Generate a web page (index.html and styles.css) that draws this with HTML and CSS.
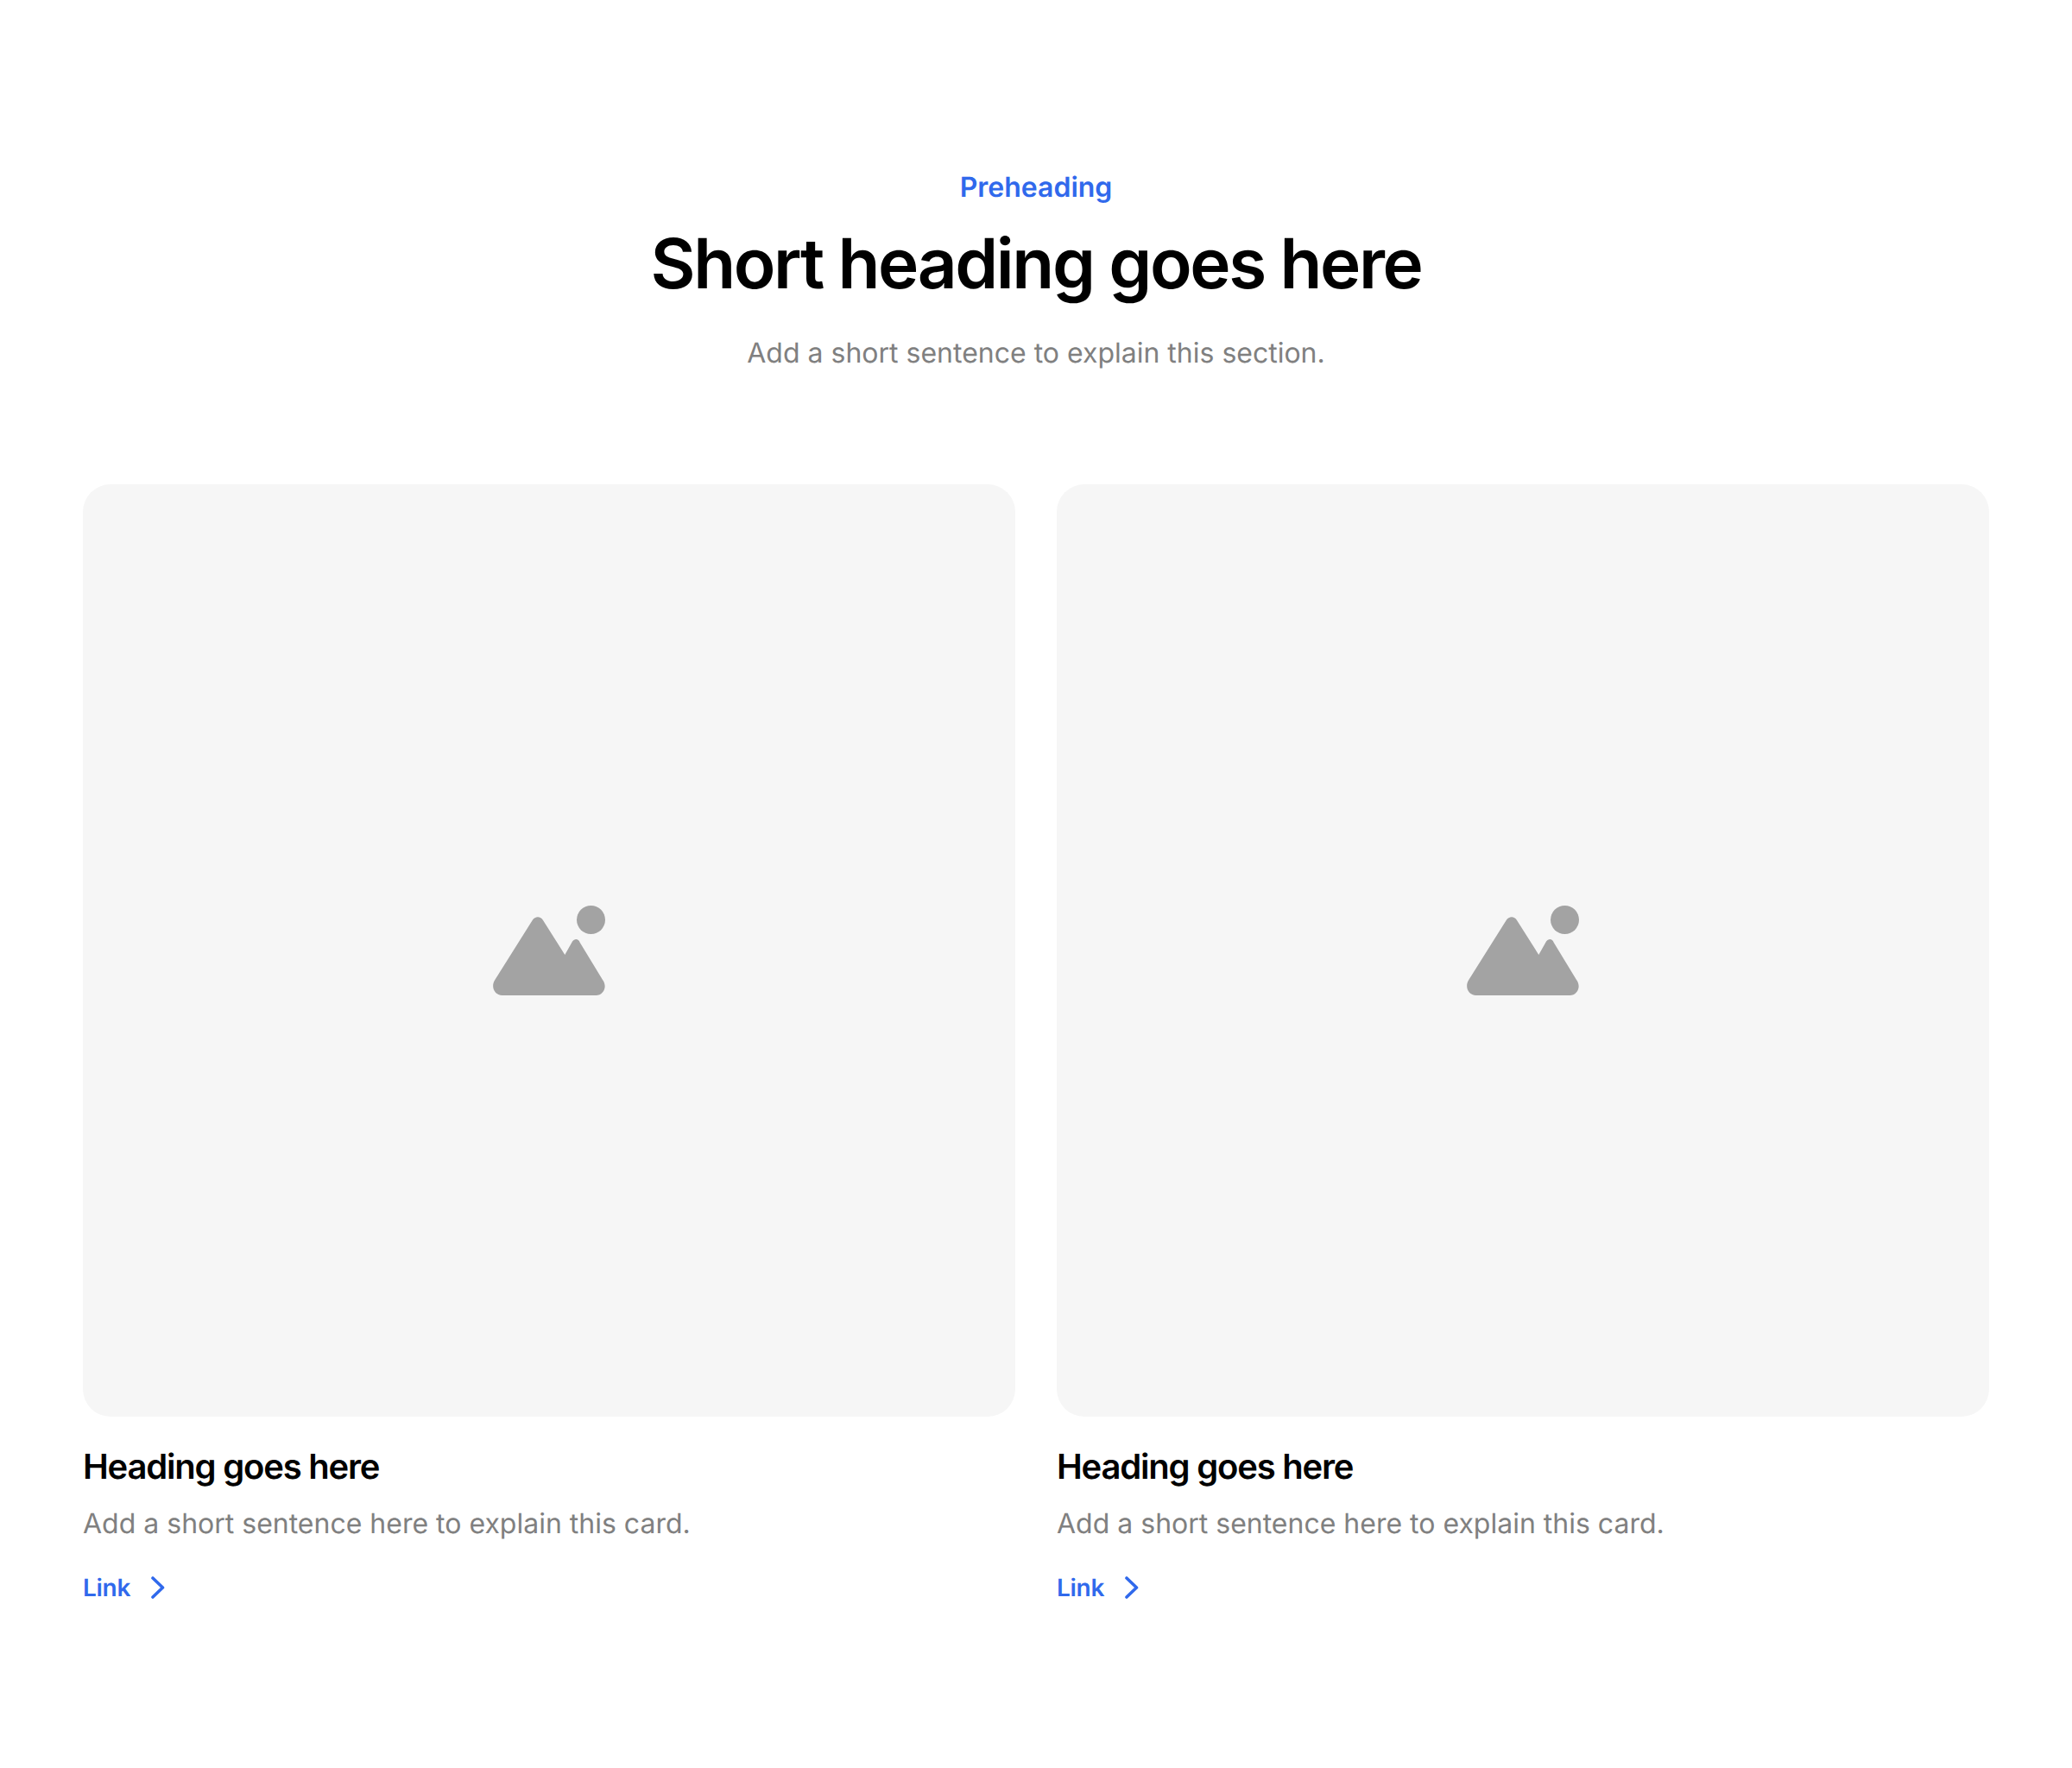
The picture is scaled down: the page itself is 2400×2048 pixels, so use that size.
FILE: index.html
```html
<!DOCTYPE html>
<html lang="en">
<head>
<meta charset="utf-8">
<title>Section</title>
<link rel="stylesheet" href="styles.css">
</head>
<body>
<section class="section">
  <header class="intro">
    <p class="pre">Preheading</p>
    <h1 class="title">Short heading goes here</h1>
    <p class="lead">Add a short sentence to explain this section.</p>
  </header>
  <div class="cards">
    <article class="card">
      <div class="media">
        <svg class="placeholder" viewBox="0 0 130 104"><circle cx="113.5" cy="16.5" r="16.5"/><path d="M10.7 104H119.300C128 104 133 94 127 86L100.700 42.700C99 38 94.500 38 92 41.500L83.300 57L58 17C55 12 49 12 45.700 17L2.300 86C-3 94 2 104 10.700 104Z"/></svg>
      </div>
      <h2 class="card-title">Heading goes here</h2>
      <p class="card-text">Add a short sentence here to explain this card.</p>
      <a class="link" href="#">Link<svg class="chev" viewBox="0 0 16 26"><path d="M2 2L13.500 13L2 24"/></svg></a>
    </article>
    <article class="card">
      <div class="media">
        <svg class="placeholder" viewBox="0 0 130 104"><circle cx="113.5" cy="16.5" r="16.5"/><path d="M10.7 104H119.300C128 104 133 94 127 86L100.700 42.700C99 38 94.500 38 92 41.500L83.300 57L58 17C55 12 49 12 45.700 17L2.300 86C-3 94 2 104 10.700 104Z"/></svg>
      </div>
      <h2 class="card-title">Heading goes here</h2>
      <p class="card-text">Add a short sentence here to explain this card.</p>
      <a class="link" href="#">Link<svg class="chev" viewBox="0 0 16 26"><path d="M2 2L13.500 13L2 24"/></svg></a>
    </article>
  </div>
</section>
</body>
</html>
```
FILE: styles.css
```css
* { box-sizing: border-box; }
html, body { margin: 0; background: #fff; }
body { font-family: Inter, "Liberation Sans", sans-serif; text-rendering: geometricPrecision; }
.section { padding: 193px 96px 0; }
.intro { display: flex; flex-direction: column; align-items: center; text-align: center; margin-bottom: 128px; }
.pre { margin: 0 0 13px; font-size: 32px; line-height: 48px; font-weight: 600; color: #3069ec; }
.title { margin: 0 0 27px; font-size: 80px; line-height: 104px; font-weight: 600; letter-spacing: -2.4px; color: #000; }
.lead { margin: 0; font-size: 32px; line-height: 48px; color: #808080; }
.cards { display: grid; grid-template-columns: 1fr 1fr; gap: 48px; }
.card { display: flex; flex-direction: column; align-items: flex-start; }
.media { width: 100%; aspect-ratio: 1; border-radius: 32px; background: #f6f6f6; display: flex; align-items: center; justify-content: center; margin-bottom: 32px; }
.placeholder { width: 130px; height: 104px; fill: #a3a3a3; }
.card-title { margin: 0 0 16px; font-size: 40px; line-height: 52px; font-weight: 600; letter-spacing: -1.2px; color: #000; }
.card-text { margin: 0 0 30px; font-size: 32px; line-height: 48px; color: #808080; }
.link { display: flex; align-items: center; gap: 24px; font-size: 28px; line-height: 40px; font-weight: 600; letter-spacing: -0.3px; color: #3069ec; text-decoration: none; }
.chev { width: 16px; height: 26px; fill: none; stroke: #3069ec; stroke-width: 3.6px; stroke-linecap: round; stroke-linejoin: round; }
```
